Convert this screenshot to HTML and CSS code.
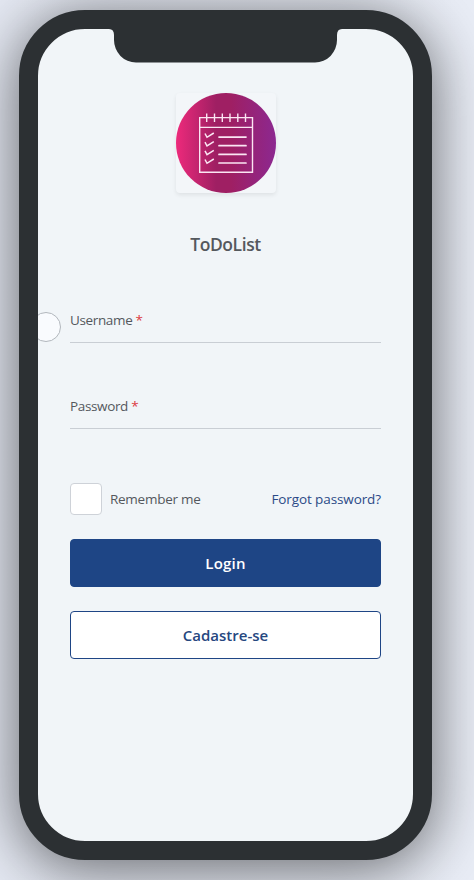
FILE: index.html
```html
<!DOCTYPE html>
<html lang="en">
<head>
<meta charset="utf-8">
<title>ToDoList</title>
<link rel="stylesheet" href="styles.css">
</head>
<body>
<main class="phone">
  <svg class="notch" width="233" height="35" viewBox="0 0 233 35" aria-hidden="true">
    <path fill="#2c3033" d="M0 0H233Q228 0 228 6V11A22 22.500 0 0 1 206 33.500H27A22 22.500 0 0 1 5 11V6Q5 0 0 0Z"/>
  </svg>
  <span class="handle"></span>
  <form class="login">
    <svg class="logo" width="100" height="100" viewBox="0 0 100 100" role="img" aria-label="ToDoList">
      <defs>
        <linearGradient id="disc" x1="0" x2="1" y1="0" y2="0">
          <stop offset="0" stop-color="#ed2a7b"/>
          <stop offset=".4" stop-color="#9f1f63"/>
          <stop offset=".55" stop-color="#9f1f63"/>
          <stop offset="1" stop-color="#8c2890"/>
        </linearGradient>
      </defs>
      <circle cx="50" cy="50" r="50" fill="url(#disc)"/>
      <g fill="none" stroke="#fbe6f3" stroke-width="1.400">
        <path d="M23.700 24.600H76.500V79.300H23.700ZM23.700 34.400H76.500M30.700 20.500V29M38.500 20.500V29M46.300 20.500V29M54 20.500V29M61.800 20.500V29M69.500 20.500V29"/>
        <path stroke-linecap="round" stroke-width="1.700" d="M43 44.100H70M43 52.700H70M43 61.400H70M43 70H70"/>
        <path stroke-width="1.500" d="M29 40.500L31 44.300L37.800 40M29 49.200L31 53L37.800 48.700M29 57.900L31 61.700L37.800 57.400M29 66.500L31 70.300L37.800 66"/>
      </g>
    </svg>
    <h1 class="title">ToDoList</h1>
    <div class="field"><label class="caption">Username <b class="required">*</b></label></div>
    <div class="field"><label class="caption">Password <b class="required">*</b></label></div>
    <div class="options">
      <label class="remember"><span class="box"></span><span class="remember-text">Remember me</span></label>
      <a class="forgot">Forgot password?</a>
    </div>
    <button class="button primary" type="button"><span>Login</span></button>
    <button class="button outline" type="button"><span>Cadastre-se</span></button>
  </form>
</main>
</body>
</html>
```
FILE: styles.css
```css
* { box-sizing: border-box; }
body {
  margin: 0;
  height: 880px;
  overflow: hidden;
  padding: 10px 0 0 19px;
  background: linear-gradient(90deg, #e4e8f2, #e9edf6);
  font-family: "Segoe UI", "Open Sans", "Noto Sans", sans-serif;
  font-size: 13.5px;
  color: #54585d;
}
.phone {
  position: relative;
  width: 413px;
  height: 850px;
  border: 19px solid #2c3033;
  border-radius: 66px;
  background: #f1f5f8;
  box-shadow: 0 8px 58px 2px rgba(0, 0, 0, .55);
  overflow: hidden;
}
.notch { position: absolute; top: 0; left: 71px; }
.handle {
  position: absolute;
  left: -7px;
  top: 283px;
  width: 30px;
  height: 30px;
  border: 1px solid #b2b7bd;
  border-radius: 50%;
  background: #f9fbfe;
}
.login { display: flex; flex-direction: column; padding: 64px 32px 0; }
.logo {
  align-self: center;
  border-radius: 4px;
  background: #f3f6f9;
  box-shadow: 0 2px 4px rgba(0, 0, 0, .08);
}
.title {
  margin: 39px 0 0;
  text-align: center;
  font-size: 17.5px;
  line-height: 24px;
  font-weight: 600;
  letter-spacing: -.4px;
}
.field {
  height: 48px;
  margin-top: 38px;
  border-bottom: 1px solid #c9ced4;
  line-height: 20px;
  padding-top: 15px;
}
.title + .field { margin-top: 39px; }
.caption { letter-spacing: -.36px; }
.required { color: #dc3940; font-weight: 400; }
.options { display: flex; justify-content: space-between; align-items: center; margin-top: 54px; height: 32px; }
.remember { display: flex; align-items: center; gap: 8px; letter-spacing: -.27px; }
.box { width: 32px; height: 32px; border: 1px solid #ced2d8; border-radius: 4px; background: #fff; }
.forgot { color: #2b4a87; letter-spacing: -.1px; }
.button {
  height: 48px;
  margin-top: 24px;
  border: 1px solid #1e4585;
  border-radius: 4px;
  font: 600 15px "Segoe UI", "Open Sans", "Noto Sans", sans-serif;
}
.primary { background: #1e4585; color: #fff; letter-spacing: .2px; }
.outline { background: #fff; color: #26477f; }
```
